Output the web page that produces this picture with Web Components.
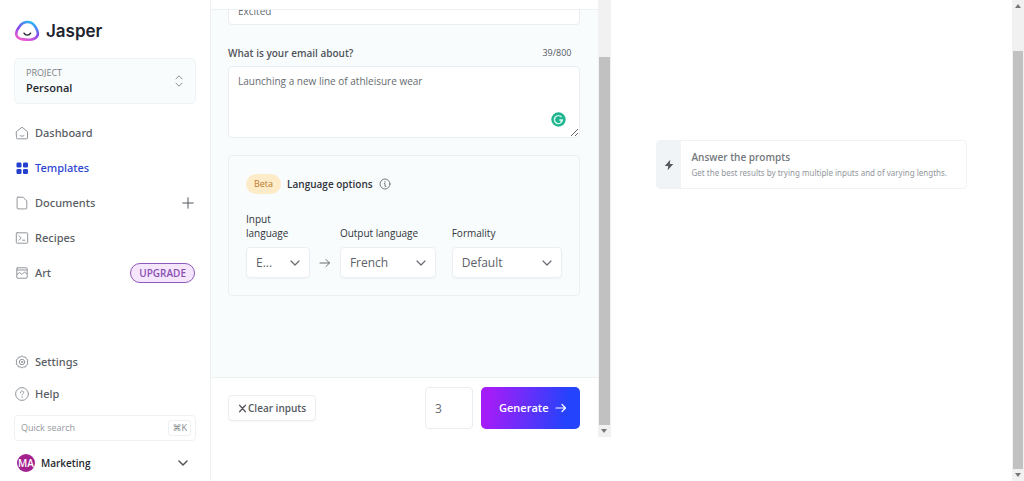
<!DOCTYPE html>
<html lang="en">
<head>
<meta charset="utf-8">
<title>Jasper</title>
<style>
html, body { margin: 0; height: 100%; overflow: hidden; background: #fff; }
body { font-family: "Open Sans", "Noto Sans", sans-serif; color: #4b5057; }
</style>
</head>
<body>
<jasper-app></jasper-app>
<script>
const define = (name, html) => customElements.define(name, class extends HTMLElement {
  constructor() {
    super();
    const t = document.createElement('template');
    t.innerHTML = typeof html === 'function' ? html(this) : html;
    this.attachShadow({ mode: 'open' }).append(t.content.cloneNode(true));
  }
});

const icons = {
  home: '<path d="M1.500 5.500 7 1.200l5.500 4.300V12a.8.8 0 0 1-.8.8H2.300a.8.8 0 0 1-.8-.8z"/><path d="M5 9.500c1 1 3 1 4 0"/>',
  grid: '<g fill="currentColor" stroke="none"><rect x="1.500" y="1.500" width="5" height="5" rx="1.300"/><rect x="8" y="1.500" width="5" height="5" rx="1.300"/><rect x="1.500" y="8" width="5" height="5" rx="1.300"/><rect x="8" y="8" width="5" height="5" rx="1.300"/></g>',
  doc: '<path d="M3 1.200h5l3.800 3.800v7a.9.9 0 0 1-.9.9H3a.9.9 0 0 1-.9-.9V2.100a.9.9 0 0 1 .9-.9z"/>',
  recipe: '<rect x="1.300" y="1.800" width="11.400" height="10.400" rx=".8"/><path d="m4 4.800 2.200 2.200L4 9.200M7.500 9.200h2.300"/>',
  art: '<rect x="1.800" y="1.800" width="10.400" height="10.400" rx=".8"/><path d="m2 8.500 2.500-2 2.500 2 2.600-2.600L12 8M2 4h10"/>',
  gear: '<path d="m7 1 1.600 1.100 1.900-.1.700 1.800 1.600 1.100L12.300 7l.5 2.100-1.600 1.100-.7 1.800-1.900-.1L7 13l-1.600-1.100-1.900.1-.7-1.800-1.600-1.100L1.700 7l-.5-2.100 1.600-1.100L3.500 2l1.900.1z"/><circle cx="7" cy="7" r="2.700"/><circle cx="7" cy="7" r=".6"/>',
  help: '<circle cx="7" cy="7" r="6.400"/><path d="M5.400 5.700c0-2.200 3.300-2.200 3.300-.2 0 1.200-1.600 1.200-1.600 2.500M7.100 9.700v.7"/>',
  plus: '<path d="M7 1.800v10.400M1.800 7h10.400"/>',
  down: '<path d="m3 5 4 4 4-4"/>',
  updown: '<path d="m4 4.800 3-3 3 3M4 9.200l3 3 3-3"/>',
  right: '<path d="M2 7h9.500M8 3.500 11.500 7 8 10.500"/>',
  info: '<circle cx="7" cy="7" r="5.800"/><path d="M6.200 6.500H7v3.300h1M7 4v.8"/>',
  bolt: '<path d="M8.500.8 2 8.200h4L5.400 13.200 12 5.800H8z" fill="currentColor" stroke="none"/>',
  cross: '<path d="m2.500 2 9 10M11.500 2l-9 10"/>'
};
define('ui-icon', el => `<style>
:host { display: block; width: 14px; height: 14px; flex: none; }
svg { display: block; width: 100%; height: 100%; fill: none; stroke: currentColor; stroke-width: var(--stroke, 1); stroke-linecap: round; stroke-linejoin: round; }
</style><svg viewBox="0 0 14 14" aria-hidden="true">${icons[el.getAttribute('name')]}</svg>`);

define('brand-logo', `<style>
:host { display: flex; align-items: center; gap: 6px; color: #20232f; font: 600 17px/24px Inter, sans-serif; }
svg { width: 26px; height: 22px; }
</style>
<svg viewBox="0 0 26 22" fill="none" aria-hidden="true"><defs><linearGradient id="g" x1=".25" y1="1" x2=".75" y2="0"><stop stop-color="#f45bd0"/><stop offset=".5" stop-color="#8148ee"/><stop offset="1" stop-color="#28bdf2"/></linearGradient></defs>
<path d="M13.500 2C9.500 2 7.500 3.500 5.500 6.500 3.500 9 1.600 11.500 2.400 15c.8 3.500 4 4 6.600 4.400 2.500.4 4 .6 7 .3 3.500-.3 6.500-1.500 7.600-4.400 1.200-3-.6-6-2.400-8.800C19.400 3.500 17.500 2 13.500 2z" stroke="url(#g)" stroke-width="2.600"/>
<path d="M10 13.200c1.600 2.600 5 2.600 6.600 0" stroke="#20232f" stroke-width="1.400" stroke-linecap="round"/></svg><span>Jasper</span>`);

define('project-picker', `<style>
:host { display: block; }
button { width: 100%; height: 46px; box-sizing: border-box; display: flex; align-items: center; justify-content: space-between; padding: 0 9px 0 11px; border: 1px solid #edf3f7; border-radius: 5px; background: #f9fcfd; font: inherit; text-align: left; color: #8a9096; }
small { display: block; font-size: 9px; line-height: 14px; color: #777c82; }
b { display: block; font-size: 11px; line-height: 16px; font-weight: 600; color: #25282d; }
</style><button type="button"><span><small>PROJECT</small><b>Personal</b></span><ui-icon name="updown"></ui-icon></button>`);

define('nav-item', el => `<style>
:host { display: flex; align-items: center; height: 35px; padding-right: 1px; color: #595d63; }
:host([short]) { height: 32px; }
:host([active]) { color: #2c46d0; }
a { display: flex; align-items: center; gap: 6px; flex: 1; padding-left: 1px; color: inherit; text-decoration: none; font: 500 11px/16px "Noto Sans", sans-serif; }
ui-icon { color: #92979d; }
:host([active]) ui-icon { color: #2540cf; }
</style><a href="#"><ui-icon name="${el.getAttribute('icon')}"></ui-icon><span><slot></slot></span></a><slot name="action"></slot>`);

define('quick-search', `<style>
:host { display: flex; align-items: center; height: 26px; box-sizing: border-box; border: 1px solid #f0f2f4; border-radius: 4px; padding: 0 4px 0 6px; }
input { flex: 1; min-width: 0; border: 0; padding: 0; background: none; outline: 0; font: 9px/14px "Open Sans", sans-serif; color: #555; }
input::placeholder { color: #94989e; opacity: 1; }
kbd { border: 1px solid #eef0f2; border-radius: 3px; padding: 0 3px; font: 9px/14px "Open Sans", "DejaVu Sans", sans-serif; color: #85898f; }
</style><input type="search" aria-label="Quick search" placeholder="Quick search"><kbd>⌘K</kbd>`);

define('account-menu', `<style>
:host { display: block; }
button { width: 100%; display: flex; align-items: center; gap: 6px; padding: 0 6px 0 3px; border: 0; background: none; font: 600 10px/18px "Open Sans", sans-serif; color: #25282d; }
i { width: 18px; height: 18px; border-radius: 50%; background: #a3218f; color: #fff; font-style: normal; text-align: center; }
b { flex: 1; text-align: left; font-weight: 600; }
ui-icon { color: #555; --stroke: 1.500; }
</style><button type="button"><i>MA</i><b>Marketing</b><ui-icon name="down"></ui-icon></button>`);

define('side-bar', `<style>
:host { display: flex; flex-direction: column; min-height: 0; box-sizing: border-box; padding: 19px 14px 9px; border-right: 1px solid #edf0f3; background: #fff; }
project-picker { margin: 15px 0 11px; }
nav { display: flex; flex-direction: column; }
.end { margin-top: auto; }
quick-search { margin: 5px 0 13px; }
button { font: 600 10px/16px "Open Sans", sans-serif; }
.add { border: 0; padding: 0; background: none; color: #55595f; }
.up { border: 1px solid #9058b8; border-radius: 10px; background: #f5e5fd; color: #8a50b2; padding: 1px 8px; }
</style>
<brand-logo></brand-logo>
<project-picker></project-picker>
<nav aria-label="Main">
<nav-item icon="home">Dashboard</nav-item>
<nav-item icon="grid" active>Templates</nav-item>
<nav-item icon="doc">Documents<button slot="action" class="add" type="button" aria-label="New document"><ui-icon name="plus"></ui-icon></button></nav-item>
<nav-item icon="recipe">Recipes</nav-item>
<nav-item icon="art">Art<button slot="action" class="up" type="button">UPGRADE</button></nav-item>
</nav>
<nav class="end" aria-label="Support">
<nav-item icon="gear" short>Settings</nav-item>
<nav-item icon="help" short>Help</nav-item>
</nav>
<quick-search></quick-search>
<account-menu></account-menu>`);

define('scroll-rail', el => `<style>
:host { display: flex; flex-direction: column; background: #f1f1f1; }
i { flex: none; width: 6px; height: 4px; margin: 4px auto; background: #777; clip-path: polygon(0 0, 100% 0, 50% 100%); }
i.up { clip-path: polygon(0 100%, 100% 100%, 50% 0); visibility: ${el.hasAttribute('no-up') ? 'hidden' : 'visible'}; }
b { flex: 1; margin: var(--lead) 1px 0; background: #c1c1c1; }
</style><i class="up"></i><b></b><i></i>`);

define('select-field', el => `<style>
:host { display: block; min-width: 0; }
label { display: block; font-size: 10px; line-height: 14px; color: #30343a; margin-bottom: 7px; }
div { display: grid; align-items: center; }
select, ui-icon { grid-area: 1 / 1; }
select { appearance: none; width: 100%; height: 31px; box-sizing: border-box; border: 1px solid #ebeff3; border-radius: 4px; background: #fff; padding: 0 24px 0 9px; font: 12px/16px "Open Sans", sans-serif; color: #5c6167; box-shadow: 0 1px 2px #0000000a; }
ui-icon { justify-self: end; margin-right: 8px; color: #666b71; pointer-events: none; --stroke: 1.200; }
</style><label for="s">${el.getAttribute('label')}</label><div><select id="s"><option>${el.getAttribute('value')}</option></select><ui-icon name="down"></ui-icon></div>`);

define('language-options', `<style>
:host { display: block; border: 1px solid #ebf0f4; border-radius: 4px; padding: 17px; }
header { display: flex; align-items: center; gap: 6px; height: 22px; }
.beta { border-radius: 11px; background: #feebc8; color: #b9792d; font-size: 9px; line-height: 20px; padding: 0 8px; }
h2 { margin: 0; font-size: 10px; line-height: 16px; font-weight: 600; color: #30343a; }
header ui-icon { width: 12px; height: 12px; color: #666; }
.row { display: grid; grid-template-columns: 64fr 14px 96fr 118fr; align-items: end; margin-top: 17px; column-gap: 8px; }
.row > ui-icon { margin-bottom: 8px; color: #666b71; }
.last { margin-left: 8px; }
</style>
<header><span class="beta">Beta</span><h2>Language options</h2><ui-icon name="info"></ui-icon></header>
<div class="row">
<select-field label="Input language" value="E..."></select-field>
<ui-icon name="right"></ui-icon>
<select-field label="Output language" value="French"></select-field>
<select-field class="last" label="Formality" value="Default"></select-field>
</div>`);

define('prompt-form', `<style>
:host { display: flex; flex-direction: column; min-width: 0; }
.scroll { flex: 1; min-height: 0; overflow: hidden; margin-top: 9px; border: solid #edf1f4; border-width: 1px 0; background: #f9fcfd; padding: 0 18px 0 17px; }
input, textarea { display: block; width: 100%; box-sizing: border-box; border: 1px solid #e9eef2; border-radius: 4px; background: #fff; padding: 0 9px; font: 10px/16px "Open Sans", sans-serif; color: #666b70; outline: 0; }
.tone { height: 28px; margin-top: -13px; }
.head { display: flex; justify-content: space-between; align-items: center; margin: 20px 8px 5px 0; font-size: 9px; line-height: 16px; color: #55595f; }
label { font-size: 10px; font-weight: 600; color: #50545a; }
.box { position: relative; }
textarea { height: 72px; padding: 6px 9px; resize: both; }
.badge { position: absolute; right: 14px; bottom: 11px; width: 15px; height: 15px; }
language-options { margin-top: 17px; }
footer { display: flex; align-items: center; gap: 8px; padding: 9px 18px 8px 17px; }
button { font: 600 10px/16px "Open Sans", sans-serif; display: flex; align-items: center; border-radius: 4px; }
.clear { gap: 1px; margin-right: auto; padding: 4px 9px; border: 1px solid #ebeef0; background: #fff; color: #55595f; box-shadow: 0 1px 2px #0000000a; }
.clear ui-icon { width: 9px; height: 9px; --stroke: 2; }
.count { width: 48px; height: 42px; font-size: 12px; }
.go { height: 42px; gap: 5px; padding: 0 12px 0 18px; border: 0; border-radius: 5px; background: linear-gradient(100deg, #a31df8 10%, #2443fc 85%); color: #fff; font-size: 11px; --stroke: 1.200; }
</style>
<div class="scroll">
<input class="tone" aria-label="Tone of voice" value="Excited">
<div class="head"><label for="about">What is your email about?</label><span>39/800</span></div>
<div class="box"><textarea id="about" spellcheck="false">Launching a new line of athleisure wear</textarea>
<svg class="badge" viewBox="0 0 15 15" fill="none" aria-hidden="true"><circle cx="7.500" cy="7.500" r="7.200" fill="#1fb58f"/><path d="M10.600 5.200A4 4 0 1 0 11.400 8H8.300M11.200 8l-1.400 2" stroke="#d5f6ec" stroke-width="1.400"/></svg></div>
<language-options></language-options>
</div>
<footer>
<button class="clear" type="button"><ui-icon name="cross"></ui-icon>Clear inputs</button>
<input class="count" aria-label="Number of outputs" value="3">
<button class="go" type="button">Generate<ui-icon name="right"></ui-icon></button>
</footer>`);

define('prompt-tip', `<style>
:host { display: grid; grid-template-columns: 24px 1fr; border: 1px solid #f0f2f4; border-radius: 4px; overflow: hidden; background: #fff; }
.mark { display: grid; place-items: center; background: #f1f4f6; color: #55595f; }
.mark ui-icon { width: 12px; height: 12px; }
.copy { padding: 8px 0 8px 11px; }
h3 { margin: 0; font-size: 10px; line-height: 16px; font-weight: 600; color: #74787e; }
p { margin: 0; font: 8px/15px "Noto Sans", sans-serif; color: #92969c; white-space: nowrap; }
</style><div class="mark"><ui-icon name="bolt"></ui-icon></div><div class="copy"><h3><slot name="title"></slot></h3><p><slot></slot></p></div>`);

define('jasper-app', `<style>
:host { display: grid; grid-template-columns: 211px 400fr 402fr 12px; grid-template-rows: 100%; height: 100vh; }
.form { display: grid; grid-template-columns: 1fr 13px; grid-template-rows: 100%; margin-bottom: 44px; min-width: 0; }
.form scroll-rail { --lead: 45px; }
.page { --lead: 39px; }
main { padding: 140px 45px 0; min-width: 0; }
</style>
<side-bar></side-bar>
<section class="form"><prompt-form></prompt-form><scroll-rail no-up></scroll-rail></section>
<main><prompt-tip><span slot="title">Answer the prompts</span>Get the best results by trying multiple inputs and of varying lengths.</prompt-tip></main>
<scroll-rail class="page"></scroll-rail>`);
</script>
</body>
</html>
